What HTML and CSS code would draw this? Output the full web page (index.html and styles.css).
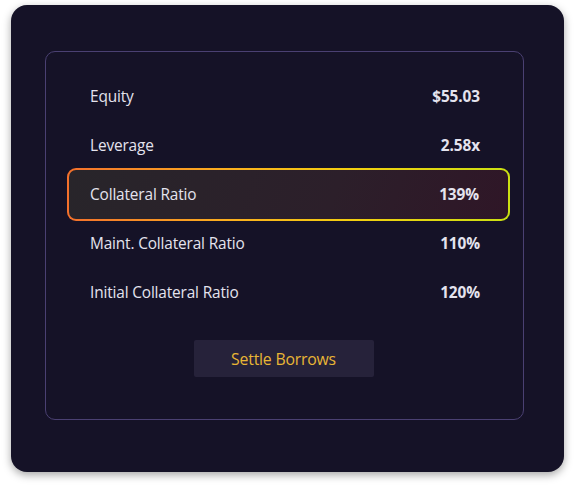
FILE: index.html
```html
<!DOCTYPE html>
<html>
<head>
<meta charset="utf-8">
<link rel="stylesheet" href="styles.css">
</head>
<body>
<div class="card">
  <div class="panel">
    <div class="rows">
      <div class="row"><span class="label">Equity</span><span class="value">$55.03</span></div>
      <div class="row"><span class="label">Leverage</span><span class="value">2.58x</span></div>
      <div class="row highlight"><span class="label">Collateral Ratio</span><span class="value">139%</span></div>
      <div class="row"><span class="label">Maint. Collateral Ratio</span><span class="value">110%</span></div>
      <div class="row"><span class="label">Initial Collateral Ratio</span><span class="value">120%</span></div>
    </div>
    <div class="actions">
      <button class="settle">Settle Borrows</button>
    </div>
  </div>
</div>
</body>
</html>
```
FILE: styles.css
```css
html, body {
  margin: 0;
  padding: 0;
  background: #ffffff;
}
body {
  width: 575px;
  height: 488px;
  font-family: "Open Sans", "Noto Sans", sans-serif;
}
.card {
  margin: 5px 0 0 11px;
  width: 553px;
  height: 467px;
  box-sizing: border-box;
  background: #151227;
  border-radius: 16px;
  box-shadow: 0 3px 8px rgba(0, 0, 0, 0.35);
  padding: 46px 40px 0 34px;
}
.panel {
  width: 479px;
  height: 369px;
  box-sizing: border-box;
  border: 1px solid #4a4072;
  border-radius: 10px;
  padding: 20px 13px 0 21px;
}
.rows {
  display: flex;
  flex-direction: column;
}
.row {
  height: 49px;
  display: flex;
  align-items: center;
  justify-content: space-between;
  padding: 0 30px 0 23px;
  box-sizing: border-box;
  color: #e4e3ee;
  font-size: 15.4px;
}
.label {
  font-weight: 400;
  letter-spacing: -0.15px;
}
.value {
  font-weight: 700;
  letter-spacing: -0.1px;
}
.highlight {
  height: 53px;
  margin: -2px 0;
  padding: 0 29px 0 21px;
  border: 2px solid transparent;
  border-radius: 9px;
  background:
    linear-gradient(110deg, #28252a 0%, #2c1f2a 60%, #2f1627 100%) padding-box,
    linear-gradient(90deg, #f4702c 0%, #fbad1f 35%, #f2cf10 65%, #cbe012 100%) border-box;
}
.actions {
  display: flex;
  justify-content: center;
  padding-top: 23px;
  padding-right: 10px;
}
.settle {
  width: 180px;
  height: 37px;
  border: none;
  border-radius: 2px;
  background: #26223a;
  color: #e9b635;
  font-family: "Open Sans", "Noto Sans", sans-serif;
  font-size: 15.8px;
  letter-spacing: -0.2px;
  cursor: pointer;
}
```
